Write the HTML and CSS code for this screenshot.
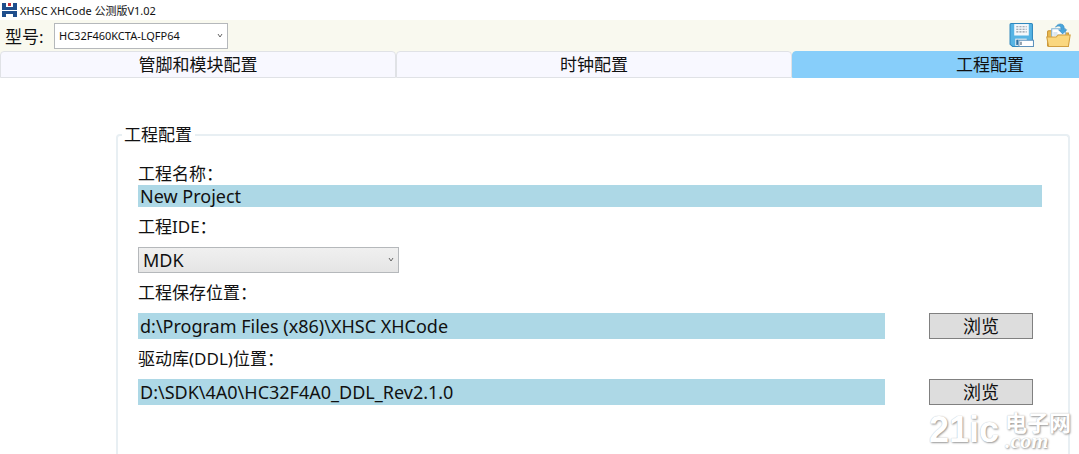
FILE: index.html
```
<!DOCTYPE html>
<html lang="zh-CN">
<head>
  <meta charset="UTF-8">
  <title>XHSC XHCode 公测版V1.02</title>
  <link rel="stylesheet" href="styles.css">
</head>
<body>

  <div class="app">
    <!-- Title bar -->
    <header class="titlebar">
      <svg class="logo" viewBox="0 0 16 16" aria-hidden="true">
        <path fill="#1f4e8c" d="M1 1h4v4h7V1h4v7H1zM1 9h15v6h-4v-3H5v3H1z"/>
        <path fill="#c8313a" d="M7 1h3v3H7z"/>
      </svg>
      <span>XHSC XHCode 公测版V1.02</span>
    </header>

    <!-- Toolbar -->
    <div class="toolbar">
      <label class="model-label" for="model">型号:</label>
      <div class="dropdown model">
        <select id="model">
          <option>HC32F460KCTA-LQFP64</option>
        </select>
        <svg class="chevron" viewBox="0 0 8 8" aria-hidden="true"><path d="M2 2l2 3 2-3"/></svg>
      </div>
      <div class="tools">
        <button class="tool" type="button" aria-label="保存">
          <svg viewBox="0 0 24 24">
            <path fill="#56b4e4" stroke="#2f88bd" d="M1.500.500h20q1 0 1 1v21h-19l-2.500-2V1.500q0-1 1-1z"/>
            <path fill="#f4f8fb" d="M5 1h14v11H5z"/>
            <path stroke="#8a97a3" stroke-dasharray="2 1" d="M7 3.500h10M7 6h10M7 8.500h10"/>
            <path fill="#e5edf2" d="M6 15h11v7H6z"/>
            <path fill="#2b6f9f" d="M7 16h2v5H7z"/>
            <path fill="#fff" stroke="#5f93bd" d="M9.500 16.500h14v6h-14z"/>
            <path stroke="#36536b" d="M11.500 18v3"/>
          </svg>
        </button>
        <button class="tool" type="button" aria-label="打开">
          <svg viewBox="0 0 24 24">
            <path fill="#e9b950" stroke="#c89435" d="M1.500 22V8.500q0-1 1-1h5l2 2h12V22z"/>
            <path fill="#fff" stroke="#7fb2d6" d="M5.500 5.500h13V17h-13z"/>
            <path stroke="#b9cfdf" d="M7 9.500h4M7 11.500h10"/>
            <path fill="#48a5dc" stroke="#2b84bb" stroke-width=".5" d="M9 4Q12-.5 16 1.500q2 1.500 1.500 5H20l-4 4-4-4h2.500q.3-3-1.500-3.500Q11.500 2.500 9 4z"/>
            <path fill="#fad77e" stroke="#d19f40" d="M.7 13.500h9l2-2h11.500l-1.700 11h-19z"/>
          </svg>
        </button>
      </div>
    </div>

    <!-- Tabs -->
    <nav class="tabs">
      <button class="tab" type="button">管脚和模块配置</button>
      <button class="tab" type="button">时钟配置</button>
      <button class="tab active" type="button">工程配置</button>
    </nav>

    <!-- Project settings -->
    <main class="content">
      <fieldset class="group">
        <legend>工程配置</legend>
        <form class="fields">
          <div class="field compact">
            <label for="name">工程名称：</label>
            <input id="name" type="text" value="New Project">
          </div>
          <div class="field">
            <label for="ide">工程IDE：</label>
            <div class="dropdown ide">
              <select id="ide">
                <option>MDK</option>
              </select>
              <svg class="chevron" viewBox="0 0 8 8" aria-hidden="true"><path d="M2 2l2 3 2-3"/></svg>
            </div>
          </div>
          <div class="field">
            <label for="path">工程保存位置：</label>
            <div class="path-row">
              <input id="path" type="text" value="d:\Program Files (x86)\XHSC XHCode">
              <button class="browse" type="button">浏览</button>
            </div>
          </div>
          <div class="field">
            <label for="ddl">驱动库(DDL)位置：</label>
            <div class="path-row">
              <input id="ddl" type="text" value="D:\SDK\4A0\HC32F4A0_DDL_Rev2.1.0">
              <button class="browse" type="button">浏览</button>
            </div>
          </div>
        </form>
      </fieldset>
    </main>

    <div class="watermark">
      <span class="mark">21ic</span>
      <span class="site">
        <span class="site-name">电子网</span>
        <span class="site-com">.com</span>
      </span>
    </div>
  </div>

</body>
</html>
```
FILE: styles.css
```
* {
  box-sizing: border-box;
}

body {
  margin: 0;
  background: #fff;
  color: #111;
  font-family: "Noto Sans", "Noto Sans CJK SC", sans-serif;
  font-size: 17px;
}

button,
input,
select {
  font-family: inherit;
  font-size: inherit;
  color: inherit;
  margin: 0;
}

.app {
  position: relative;
  display: flex;
  flex-direction: column;
  height: 100vh;
  overflow: hidden;
}

.titlebar {
  display: flex;
  align-items: center;
  gap: 3px;
  height: 20px;
  padding-left: 1px;
  font-size: 11px;
  flex-shrink: 0;
}

.logo {
  width: 16px;
  height: 16px;
}

/* Toolbar */
.toolbar {
  display: flex;
  align-items: center;
  height: 31px;
  padding: 0 8px 0 5px;
  background: #f9f9ef;
  flex-shrink: 0;
}

.model-label {
  width: 49px;
}

.dropdown {
  position: relative;
}

.dropdown select {
  display: block;
  width: 100%;
  height: 26px;
  border: 1px solid #b5b8bb;
  border-radius: 0;
  appearance: none;
}

.chevron {
  position: absolute;
  top: 9px;
  right: 4px;
  width: 8px;
  height: 8px;
  fill: none;
  stroke: #666;
  pointer-events: none;
}

.model {
  width: 174px;
}

.model select {
  padding: 0 4px;
  background: #fff;
  font-size: 11px;
}

.tools {
  display: flex;
  gap: 12px;
  margin-left: auto;
}

.tool {
  width: 25px;
  height: 25px;
  padding: 0;
  border: none;
  background: none;
}

.tool svg {
  display: block;
  width: 100%;
  height: 100%;
  fill: none;
}

/* Tabs run past the right edge of the window */
.tabs {
  display: flex;
  height: 27px;
  background: #f9f9ef;
  overflow: hidden;
  flex-shrink: 0;
}

.tab {
  flex: 0 0 36.7%;
  padding: 0;
  border: 1px solid #e0e2e6;
  border-radius: 4px 4px 0 0;
  background: #f8f8ff;
  line-height: 24px;
}

.tab.active {
  border-color: #87cefa;
  background: #87cefa;
}

/* Project settings */
.content {
  display: flex;
  flex: 1;
  padding: 45px 9px 0 116px;
}

.group {
  flex: 1;
  min-width: 0;
  margin: 0;
  padding: 16px 26px 0 20px;
  border: 2px solid #e8eff3;
  border-bottom: none;
  border-radius: 4px 4px 0 0;
}

.group legend {
  margin-left: -16px;
  padding: 0 3px 0 2px;
  line-height: 24px;
}

.fields {
  display: flex;
  flex-direction: column;
  gap: 9px;
}

.field {
  display: flex;
  flex-direction: column;
  gap: 9px;
}

.field.compact {
  gap: 0;
}

.field label {
  line-height: 22px;
}

.field input,
.field select,
.browse {
  font-size: 18px;
}

.field input {
  width: 100%;
  height: 26px;
  padding: 0 2px;
  border: none;
  background: #add8e6;
}

.field.compact input {
  height: 22px;
}

.ide {
  width: 261px;
}

.ide select {
  padding: 0 4px;
  background: linear-gradient(#f0f0f0, #e5e5e5);
}

.path-row {
  display: flex;
  gap: 44px;
  padding-right: 9px;
}

.path-row input {
  flex: 1;
  min-width: 0;
}

.browse {
  width: 104px;
  height: 26px;
  padding: 0;
  border: 1px solid #808080;
  background: #ddd;
  line-height: 22px;
}

/* Watermark */
.watermark {
  position: absolute;
  right: 8px;
  bottom: 4px;
  display: flex;
  align-items: center;
  gap: 6px;
  color: #fff;
  text-shadow: 1px 1px 2px #999, 0 0 1px #bbb;
  pointer-events: none;
}

.mark {
  font-family: "Liberation Sans", sans-serif;
  font-size: 36px;
  font-weight: bold;
  line-height: 40px;
}

.site {
  display: flex;
  flex-direction: column;
}

.site-name {
  font-family: "Noto Sans CJK SC", sans-serif;
  font-size: 22px;
  font-weight: bold;
  line-height: 22px;
}

.site-com {
  font-family: "Liberation Serif", serif;
  font-size: 22px;
  font-style: italic;
  font-weight: bold;
  line-height: 18px;
}
```
